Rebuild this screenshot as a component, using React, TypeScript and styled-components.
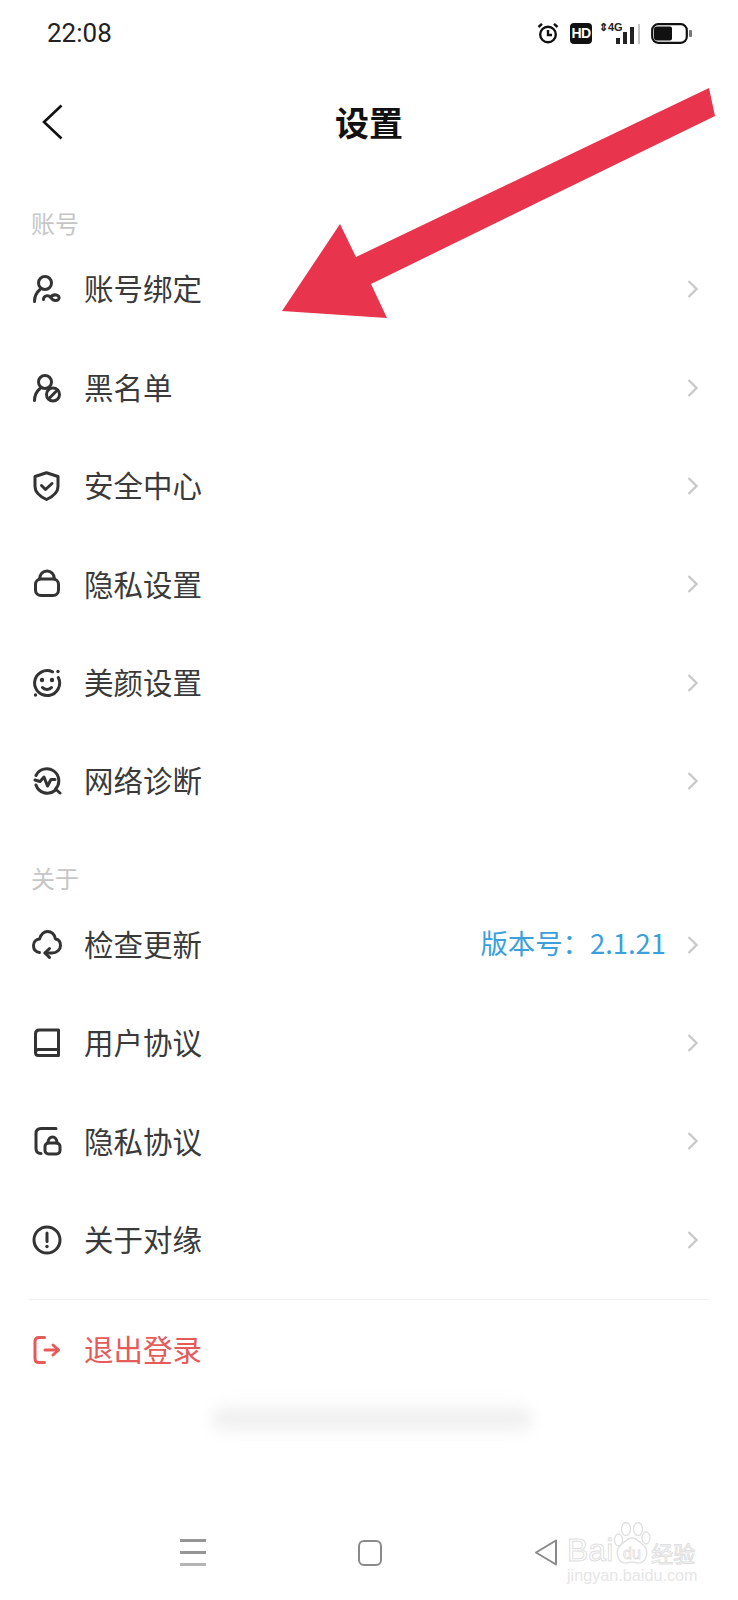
import React from 'react';
import styled, { createGlobalStyle } from 'styled-components';

const GlobalStyle = createGlobalStyle`
  html, body {
    margin: 0;
    padding: 0;
    background: #ffffff;
  }
`;

const CJK = `"Noto Sans CJK SC", "Noto Sans", sans-serif`;

const ICONS: Record<string, React.ReactNode> = {
  bind: (
    <>
      <circle cx="13" cy="9" r="6.500" />
      <path d="M2.500 27.500c0-5 2-9 5.500-12" />
      <path d="M11.500 25.500c0-4 5-5 7-2s7 4.500 8.500 1c1-3.500-5.500-5.500-8.500-1" />
    </>
  ),
  block: (
    <>
      <circle cx="13" cy="9" r="6.500" />
      <path d="M2.500 27.500c0-5 2-9 5.500-12" />
      <circle cx="21" cy="21.500" r="6.500" />
      <path d="M18 24.500l6-6" />
    </>
  ),
  shield: (
    <>
      <path d="M14.500 1.800L26 5.500v10c0 6-5 10-11.500 13C8 25.500 3 21.500 3 15.500v-10z" />
      <path d="M9.500 14.500l4 4 6.500-6" />
    </>
  ),
  lock: (
    <>
      <rect x="3.500" y="10" width="23" height="16.500" rx="5.500" />
      <path d="M7.500 10C8 5 11 2 15 2s7 3 7.500 8" />
    </>
  ),
  face: (
    <>
      <path d="M20.500 3.800A12.500 12.500 0 1 0 26.300 9.500" />
      <circle cx="10" cy="12" r="2.200" fill="#333" stroke="none" />
      <circle cx="20" cy="12" r="2.200" fill="#333" stroke="none" />
      <path d="M10.500 19.500c2 2.500 7 2.500 9 0" />
      <circle cx="26" cy="3.500" r="1.700" fill="#333" stroke="none" />
      <circle cx="3.500" cy="27" r="1.700" fill="#333" stroke="none" />
    </>
  ),
  network: (
    <>
      <path d="M4 9.500A12 12 0 1 1 23.500 23l4.500 4" />
      <path d="M23 24.500A12 12 0 0 1 4 19" />
      <path d="M3 14l5 1.500 4-4.500 3.500 9 3.500-6.500h4" />
    </>
  ),
  cloud: (
    <>
      <path d="M7.500 22.500C3.500 22 1.500 19 1.500 15.500 1.500 12 4 9.500 7.500 9 9 4.500 12 1.500 15.500 1.500c4 0 7 3 8 7.500 3.500.5 5 3 5 6.500 0 4-3.500 7.500-8.500 7.500h-7" />
      <path d="M17.500 18.500L13 23l4.500 4.500" />
    </>
  ),
  book: (
    <path d="M3.500 25V6c0-2.500 1.500-4 4-4h19v25.500h-20c-1.700 0-3-1-3-3s1.300-3 3-3h20" />
  ),
  privacy: (
    <>
      <path d="M24 2.500H9C5.500 2.500 4 4.500 4 7.500v15c0 3 1.500 5 5 5" />
      <rect x="13" y="17" width="15" height="11" rx="3.500" />
      <path d="M16 17c0-8 9-8 9 0" />
    </>
  ),
  about: (
    <>
      <circle cx="15" cy="15" r="13" />
      <path d="M15 8v8.500" />
      <circle cx="15" cy="21.500" r="1.700" fill="#333" stroke="none" />
    </>
  ),
  logout: (
    <>
      <path d="M12.500 2.500H7C4.500 2.500 3 4 3 6.500v17C3 26 4.500 27.500 7 27.500h5.500" />
      <path d="M13 15h13" />
      <path d="M21 10l5.500 5-5.500 5" />
    </>
  ),
};

type MenuItem = { icon: string; label: string; extra?: string };

const ACCOUNT_ITEMS: MenuItem[] = [
  { icon: 'bind', label: '账号绑定' },
  { icon: 'block', label: '黑名单' },
  { icon: 'shield', label: '安全中心' },
  { icon: 'lock', label: '隐私设置' },
  { icon: 'face', label: '美颜设置' },
  { icon: 'network', label: '网络诊断' },
];

const ABOUT_ITEMS: MenuItem[] = [
  { icon: 'cloud', label: '检查更新', extra: '版本号：2.1.21' },
  { icon: 'book', label: '用户协议' },
  { icon: 'privacy', label: '隐私协议' },
  { icon: 'about', label: '关于对缘' },
];

const MenuRow = ({ item }: { item: MenuItem }) => (
  <Row>
    <RowIcon viewBox="0 0 30 30">{ICONS[item.icon]}</RowIcon>
    <RowLabel>{item.label}</RowLabel>
    {item.extra && <RowExtra>{item.extra}</RowExtra>}
    <RowChevron viewBox="0 0 11 18">
      <path d="M1.500 1l8 8-8 8" />
    </RowChevron>
  </Row>
);

const App = () => {
  return (
    <Page>
      <GlobalStyle />
      <StatusBar>
        <StatusTime>22:08</StatusTime>
        <StatusIcons>
          <svg width="22" height="22" viewBox="0 0 22 22" fill="none" stroke="#111" strokeWidth="2.400">
            <circle cx="11" cy="12.500" r="7.800" />
            <path d="M11 8v5h4" />
            <path d="M1.500 5L5 1.800M20.500 5L17 1.800" />
          </svg>
          <HdBadge>HD</HdBadge>
          <SignalBox>
            <NetworkLabel>⇕4G</NetworkLabel>
            <SignalBars>
              <SignalBar $h={6} />
              <SignalBar $h={12} />
              <SignalBar $h={17} />
            </SignalBars>
            <SignalGap />
          </SignalBox>
          <svg width="41" height="21" viewBox="0 0 41 21">
            <rect x="1.200" y="1.200" width="34.600" height="18.600" rx="6" fill="none" stroke="#111" strokeWidth="2.200" />
            <path d="M6 3.500h13a2 2 0 0 1 2 2v10a2 2 0 0 1-2 2H6a3 3 0 0 1-3-3v-8a3 3 0 0 1 3-3z" fill="#111" />
            <rect x="38" y="7" width="3" height="7" rx="1" fill="#777" />
          </svg>
        </StatusIcons>
      </StatusBar>

      <Header>
        <BackIcon viewBox="0 0 21 36">
          <path d="M19.500 1.500L2 18l17.500 16.500" />
        </BackIcon>
        <Title>设置</Title>
      </Header>

      <SectionLabel>账号</SectionLabel>
      {ACCOUNT_ITEMS.map((item) => (
        <MenuRow key={item.label} item={item} />
      ))}

      <SectionLabel $gap={31}>关于</SectionLabel>
      {ABOUT_ITEMS.map((item) => (
        <MenuRow key={item.label} item={item} />
      ))}

      <Divider />

      <Row>
        <RowIcon viewBox="0 0 30 30" $danger>
          {ICONS.logout}
        </RowIcon>
        <RowLabel $danger>退出登录</RowLabel>
      </Row>

      <BlurredNote />

      <NavBar>
        <NavMenu>
          <NavLine />
          <NavLine />
          <NavLine $light />
        </NavMenu>
        <NavHome />
        <svg width="24" height="27" viewBox="0 0 24 27" fill="none" stroke="#8a8a8a" strokeWidth="2" strokeLinejoin="round">
          <path d="M22 1.500L2 13.500l20 12z" />
        </svg>
      </NavBar>

      <Watermark>
        <WatermarkLogo>
          <span>Bai</span>
          <WatermarkPaw viewBox="0 0 38 44">
            <ellipse cx="5.500" cy="18" rx="4" ry="6" />
            <ellipse cx="13" cy="7" rx="4.500" ry="6.500" />
            <ellipse cx="25" cy="7" rx="4.500" ry="6.500" />
            <ellipse cx="33" cy="16" rx="4" ry="6" />
            <path d="M19 16c5 0 8 4 12 8 5 5 3 18-7 17-2-.2-3-1-5-1s-3 .8-5 1c-10 1-12-12-7-17 4-4 7-8 12-8z" />
            <PawText x="19" y="37" textAnchor="middle">du</PawText>
          </WatermarkPaw>
          <WatermarkCn>经验</WatermarkCn>
        </WatermarkLogo>
        <WatermarkUrl>jingyan.baidu.com</WatermarkUrl>
      </Watermark>

      <ArrowOverlay viewBox="0 0 738 400">
        <polygon points="709,88 715,116 371,284 387,318 282,311 340,224 356,257" fill="#e8344c" />
      </ArrowOverlay>
    </Page>
  );
};

export default App;

const Page = styled.div`
  position: relative;
  width: 738px;
  height: 1600px;
  overflow: hidden;
  background: #ffffff;
  font-family: ${CJK};
`;

const StatusBar = styled.div`
  display: flex;
  align-items: center;
  justify-content: space-between;
  height: 66px;
  padding: 0 46px 0 47px;
`;

const StatusTime = styled.div`
  font-family: Roboto, sans-serif;
  font-size: 26px;
  color: #222222;
`;

const StatusIcons = styled.div`
  display: flex;
  align-items: center;
  gap: 11px;
`;

const HdBadge = styled.div`
  display: flex;
  align-items: center;
  justify-content: center;
  width: 22px;
  height: 21px;
  border-radius: 4px;
  background: #111111;
  color: #ffffff;
  font-family: "Liberation Sans", sans-serif;
  font-size: 14px;
  font-weight: 700;
  letter-spacing: -0.5px;
`;

const SignalBox = styled.div`
  position: relative;
  display: flex;
  align-items: flex-end;
  justify-content: flex-end;
  gap: 11px;
  width: 39px;
  height: 21px;
  margin-left: -2px;
`;

const NetworkLabel = styled.span`
  position: absolute;
  top: -2px;
  left: -2px;
  font-family: "Liberation Sans", sans-serif;
  font-size: 11px;
  font-weight: 700;
  color: #222222;
`;

const SignalBars = styled.div`
  display: flex;
  align-items: flex-end;
  gap: 3px;
`;

const SignalBar = styled.div<{ $h: number }>`
  width: 4px;
  height: ${({ $h }) => $h}px;
  background: #222222;
`;

const SignalGap = styled.div`
  width: 2px;
  height: 20px;
  margin-left: -7px;
  background: #c4c4c4;
`;

const Header = styled.div`
  position: relative;
  display: flex;
  align-items: center;
  justify-content: center;
  height: 112px;
  padding-bottom: 4px;
`;

const BackIcon = styled.svg`
  position: absolute;
  left: 42px;
  top: 38px;
  width: 21px;
  height: 36px;
  fill: none;
  stroke: #111111;
  stroke-width: 2.6;
`;

const Title = styled.div`
  font-size: 34px;
  font-weight: 700;
  line-height: 1;
  color: #111111;
`;

const SectionLabel = styled.div<{ $gap?: number }>`
  display: flex;
  align-items: center;
  height: 32px;
  margin-top: ${({ $gap }) => $gap ?? 24}px;
  padding: 0 0 2px 31px;
  font-size: 24px;
  color: #c6c6c6;
`;

const Row = styled.div`
  display: flex;
  align-items: center;
  height: 98.4px;
  padding: 0 40px 0 32px;
  box-sizing: border-box;
`;

const RowIcon = styled.svg<{ $danger?: boolean }>`
  flex: none;
  width: 30px;
  height: 30px;
  fill: none;
  stroke: ${({ $danger }) => ($danger ? '#e65a5a' : '#333333')};
  stroke-width: 3;
  stroke-linecap: round;
  stroke-linejoin: round;
`;

const RowLabel = styled.div<{ $danger?: boolean }>`
  flex: 1;
  margin-left: 22px;
  padding-bottom: 2px;
  font-size: 29.5px;
  line-height: 1;
  color: ${({ $danger }) => ($danger ? '#e65a5a' : '#3a3a3a')};
`;

const RowExtra = styled.div`
  margin-right: 21px;
  padding-bottom: 4px;
  font-size: 27.4px;
  line-height: 1;
  color: #3b9fdc;
`;

const RowChevron = styled.svg`
  flex: none;
  width: 11px;
  height: 18px;
  fill: none;
  stroke: #c9c9c9;
  stroke-width: 2.4;
`;

const Divider = styled.div`
  height: 1px;
  margin: 9.6px 29px 1px;
  background: #efefef;
`;

const BlurredNote = styled.div`
  width: 320px;
  height: 22px;
  margin: 9.4px 0 0 212px;
  border-radius: 10px;
  background: #efefef;
  filter: blur(8px);
`;

const NavBar = styled.div`
  display: flex;
  align-items: center;
  gap: 152px;
  margin-top: 109px;
  padding-left: 180px;
`;

const NavMenu = styled.div`
  display: flex;
  flex-direction: column;
  gap: 9px;
  width: 26px;
`;

const NavLine = styled.div<{ $light?: boolean }>`
  height: 3px;
  background: ${({ $light }) => ($light ? '#b4b4b4' : '#969696')};
`;

const NavHome = styled.div`
  width: 20px;
  height: 22px;
  border: 2px solid #8a8a8a;
  border-radius: 6px;
`;

const Watermark = styled.div`
  position: absolute;
  left: 567px;
  top: 1522px;
  width: 134px;
`;

const WatermarkLogo = styled.div`
  display: flex;
  align-items: flex-end;
  height: 44px;
  font-family: "Liberation Sans", sans-serif;
  font-size: 32px;
  line-height: 32px;
  color: transparent;
  -webkit-text-stroke: 1px #e0e0e0;
`;

const WatermarkPaw = styled.svg`
  flex: none;
  width: 38px;
  height: 44px;
  fill: #ffffff;
  stroke: #e0e0e0;
  stroke-width: 1.3;
`;

const PawText = styled.text`
  font-family: "Liberation Sans", sans-serif;
  font-size: 16px;
  fill: transparent;
  stroke: #e0e0e0;
  stroke-width: 0.8;
`;

const WatermarkCn = styled.span`
  font-family: ${CJK};
  font-size: 22px;
  line-height: 28px;
  white-space: nowrap;
`;

const WatermarkUrl = styled.div`
  margin-top: 1px;
  font-family: "Liberation Sans", sans-serif;
  font-size: 16.2px;
  line-height: 17px;
  color: #e6e6e6;
  white-space: nowrap;
`;

const ArrowOverlay = styled.svg`
  position: absolute;
  left: 0;
  top: 0;
  width: 738px;
  height: 400px;
`;
